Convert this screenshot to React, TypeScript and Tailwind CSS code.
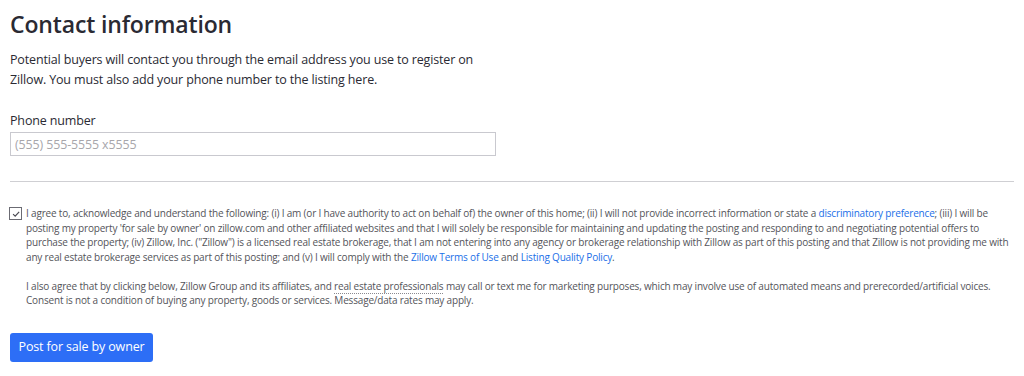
import React, { useState } from 'react';

const App: React.FC = () => {
    const [agreed, setAgreed] = useState(true);
    const [phone, setPhone] = useState('');

    return (
        <div className="min-h-screen bg-white px-[10px] pt-2 text-[#2a2a33]" style={{ fontFamily: '"Open Sans", "Noto Sans", sans-serif' }}>
            {/* Header */}
            <h1 className="text-[23px] leading-[32px] font-semibold tracking-[-0.15px]">Contact information</h1>
            <p className="mt-[10px] max-w-[480px] text-[12.5px] leading-[20px] tracking-[-0.15px]">
                Potential buyers will contact you through the email address you use to register on Zillow. You must also add your phone number to the listing here.
            </p>

            {/* Phone */}
            <label className="mt-[21px] block text-[12.5px] leading-[20px] tracking-[-0.15px]" htmlFor="phone">Phone number</label>
            <input
                id="phone"
                type="text"
                value={phone}
                onChange={(e) => setPhone(e.target.value)}
                placeholder="(555) 555-5555 x5555"
                className="mt-px block h-[24px] w-[486px] border border-[#c9c9cf] px-1 text-[12.4px] tracking-[-0.1px] outline-none placeholder:text-[#a7a6ab]"
            />

            <div className="mt-[25px] h-px bg-[#cfcfd3]" />

            {/* Terms */}
            <div className="mt-[24px] flex items-start">
                <button
                    onClick={() => setAgreed(!agreed)}
                    className="mt-[1px] ml-[-1px] flex h-[13px] w-[13px] shrink-0 items-center justify-center border border-[#6b6b73] bg-white"
                >
                    {agreed && (
                        <svg viewBox="0 0 12 12" className="h-[10px] w-[10px]" fill="none" stroke="#4a4a52" strokeWidth="1.4">
                            <path d="M2.5 6.2 L5 8.6 L9.8 3.4" />
                        </svg>
                    )}
                </button>
                <div className="ml-[4px] text-[10px] leading-[14.67px] tracking-[-0.18px] text-[#54545a]">
                    <p>
                        I agree to, acknowledge and understand the following: (i) I am (or I have authority to act on behalf of) the owner of this home; (ii) I will not provide incorrect information or state a{' '}
                        <a className="text-[#1a6fe8]" href="#">discriminatory preference</a>; (iii) I will be posting my property 'for sale by owner' on zillow.com and other affiliated websites and that I will solely be responsible for maintaining and updating the posting and responding to and negotiating potential offers to purchase the property; (iv) Zillow, Inc. ("Zillow") is a licensed real estate brokerage, that I am not entering into any agency or brokerage relationship with Zillow as part of this posting and that Zillow is not providing me with any real estate brokerage services as part of this posting; and (v) I will comply with the{' '}
                        <a className="text-[#1a6fe8]" href="#">Zillow Terms of Use</a> and{' '}
                        <a className="text-[#1a6fe8]" href="#">Listing Quality Policy</a>.
                    </p>
                    <p className="mt-[14px]">
                        I also agree that by clicking below, Zillow Group and its affiliates, and{' '}
                        <span className="border-b border-dotted border-[#8a8a90]">real estate professionals</span> may call or text me for marketing purposes, which may involve use of automated means and prerecorded/artificial voices. Consent is not a condition of buying any property, goods or services. Message/data rates may apply.
                    </p>
                </div>
            </div>

            <button className="mt-[25px] h-[29px] w-[143px] rounded-[3px] bg-[#2d6ef6] text-[12.5px] tracking-[-0.15px] text-white">
                Post for sale by owner
            </button>
        </div>
    );
};

export default App;
